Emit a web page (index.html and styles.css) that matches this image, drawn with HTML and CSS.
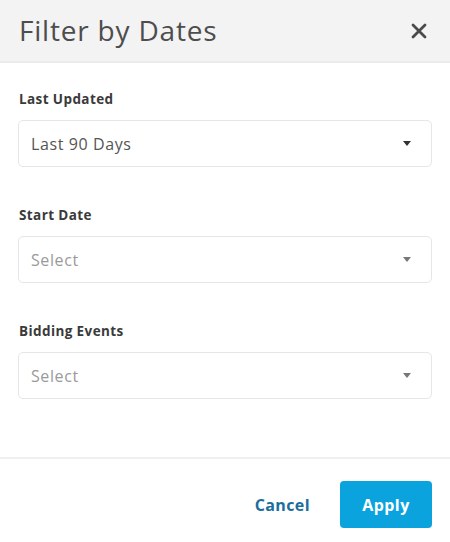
FILE: index.html
```html
<!DOCTYPE html>
<html>
<head>
<meta charset="utf-8">
<link rel="stylesheet" href="styles.css">
</head>
<body>
<div class="dialog">
  <div class="header">
    <h1 class="title">Filter by Dates</h1>
    <span class="close">
      <svg width="16" height="16" viewBox="0 0 16 16"><path d="M2 2L14 14M14 2L2 14" stroke="#4a4a4a" stroke-width="2.8" stroke-linecap="round"/></svg>
    </span>
  </div>
  <div class="content">
    <div class="field">
      <div class="label">Last Updated</div>
      <div class="select">
        <span class="value">Last 90 Days</span>
        <span class="caret dark"></span>
      </div>
    </div>
    <div class="field">
      <div class="label">Start Date</div>
      <div class="select">
        <span class="value placeholder">Select</span>
        <span class="caret"></span>
      </div>
    </div>
    <div class="field">
      <div class="label">Bidding Events</div>
      <div class="select">
        <span class="value placeholder">Select</span>
        <span class="caret"></span>
      </div>
    </div>
  </div>
  <div class="footer">
    <button class="btn-cancel">Cancel</button>
    <button class="btn-apply">Apply</button>
  </div>
</div>
</body>
</html>
```
FILE: styles.css
```css
html, body {
  margin: 0;
  padding: 0;
  background: #fff;
}
.dialog {
  width: 450px;
  height: 542px;
  font-family: "Open Sans", "DejaVu Sans", sans-serif;
  display: flex;
  flex-direction: column;
}
.header {
  height: 63px;
  flex: none;
  background: #f3f3f3;
  border-bottom: 2px solid #ebebeb;
  display: flex;
  align-items: center;
  justify-content: space-between;
  padding: 0 23px 2px 19px;
  box-sizing: border-box;
}
.title {
  margin: 0;
  font-size: 28px;
  font-weight: 400;
  color: #4d4d4d;
  letter-spacing: 0.8px;
}
.close {
  display: flex;
  width: 16px;
  height: 16px;
  margin-top: 2px;
}
.content {
  padding: 27px 18px 0 18px;
  flex: 1;
}
.field {
  margin-bottom: 39px;
}
.label {
  font-size: 13.5px;
  font-weight: 700;
  color: #3a3a3a;
  padding-left: 1px;
  line-height: 18px;
  letter-spacing: 0.4px;
  margin-bottom: 12px;
}
.select {
  height: 47px;
  box-sizing: border-box;
  border: 1px solid #e6e6e6;
  border-radius: 5px;
  display: flex;
  align-items: center;
  justify-content: space-between;
  padding: 0 20px 0 12px;
}
.value {
  font-size: 16px;
  color: #555;
  letter-spacing: 0.6px;
}
.placeholder {
  color: #9a9a9a;
}
.caret {
  width: 0;
  height: 0;
  border-left: 4.5px solid transparent;
  border-right: 4.5px solid transparent;
  border-top: 5px solid #777;
}
.caret.dark {
  border-top-color: #333;
}
.footer {
  height: 85px;
  flex: none;
  box-sizing: border-box;
  border-top: 2px solid #efefef;
  display: flex;
  align-items: center;
  justify-content: flex-end;
  padding: 8px 18px 0 0;
  gap: 30px;
}
.btn-cancel {
  background: none;
  border: none;
  font-family: inherit;
  font-size: 16px;
  font-weight: 700;
  color: #1b6e9c;
  letter-spacing: 0.4px;
  padding: 0;
  cursor: pointer;
}
.btn-apply {
  width: 92px;
  height: 47px;
  background: #0aa3dd;
  border: none;
  border-radius: 4px;
  color: #fff;
  font-family: inherit;
  font-size: 16px;
  font-weight: 700;
  letter-spacing: 0.4px;
  cursor: pointer;
}
```
